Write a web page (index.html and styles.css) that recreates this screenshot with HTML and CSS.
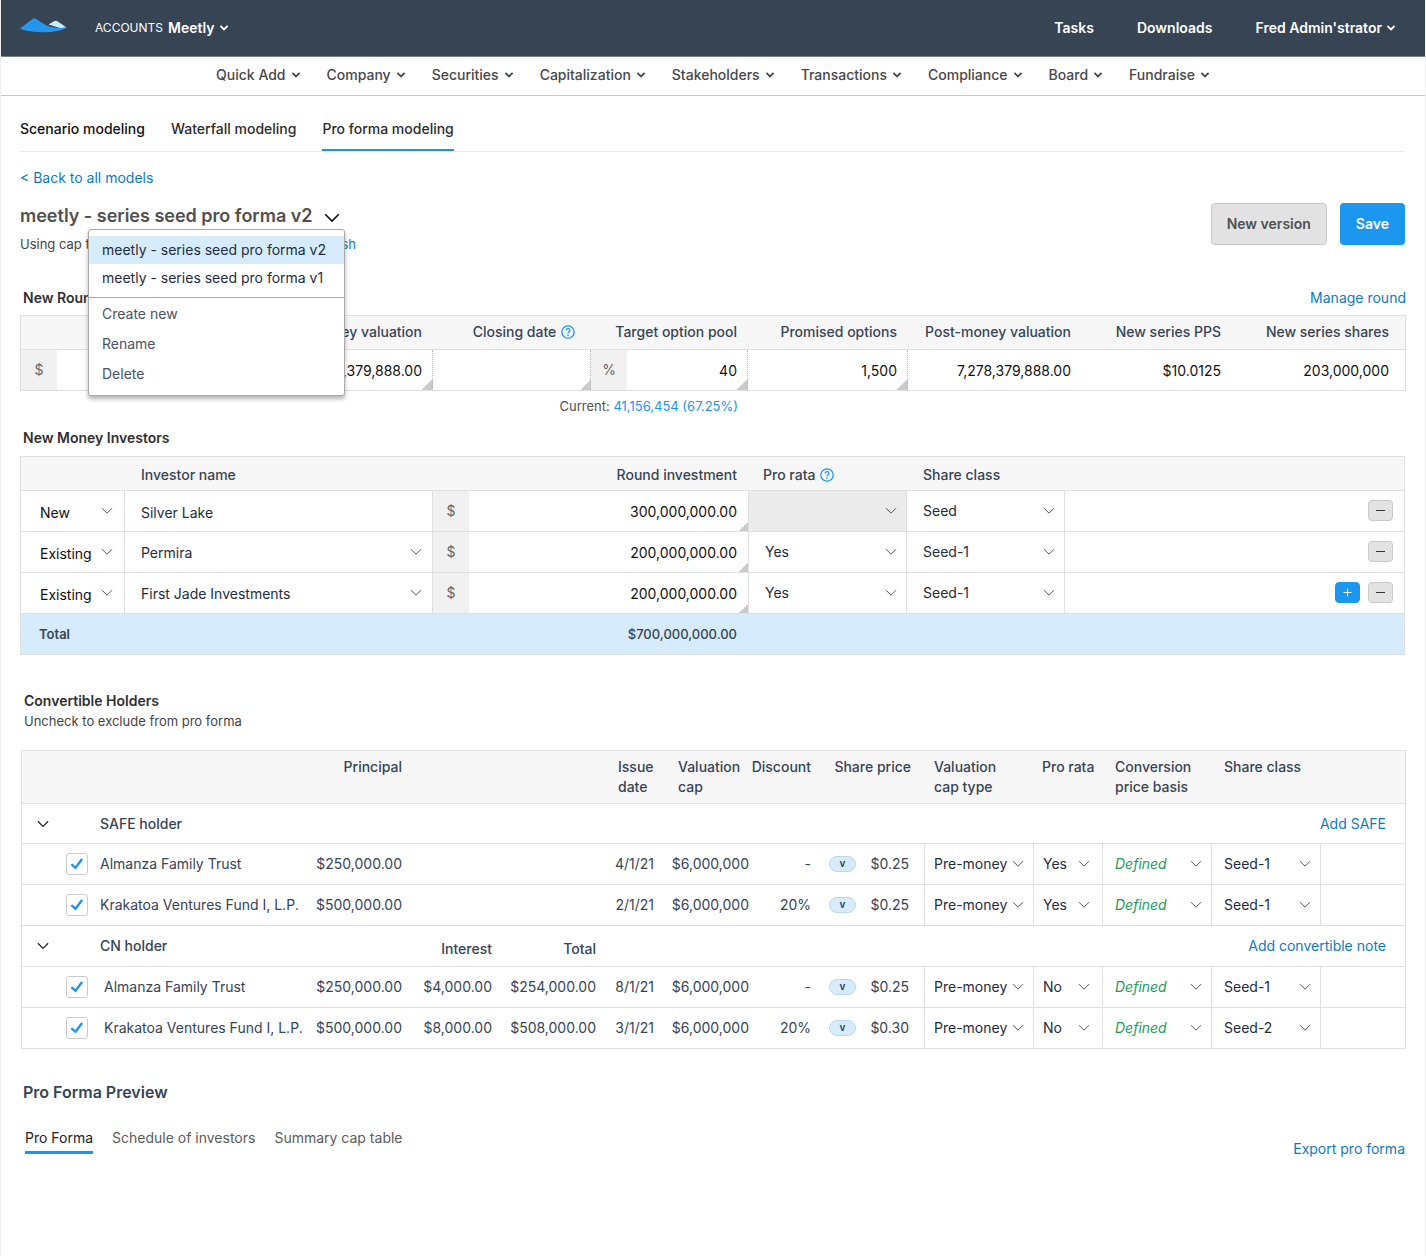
FILE: index.html
```html
<!DOCTYPE html>
<html lang="en">
<head>
<meta charset="utf-8">
<meta name="viewport" content="width=device-width, initial-scale=1">
<title>Pro forma modeling - Meetly</title>
<link rel="stylesheet" href="styles.css">
</head>
<body>
<svg class="sprite" width="0" height="0" aria-hidden="true">
  <symbol id="chev-bold" viewBox="0 0 10 8"><path d="M1.4 1.8 5 5.4l3.6-3.6" fill="none" stroke="currentColor" stroke-width="1.8"/></symbol>
  <symbol id="chev" viewBox="0 0 16 10"><path d="M1.2 1.3 8 8.1l6.800-6.800" fill="none" stroke="currentColor" stroke-width="1.600"/></symbol>
  <symbol id="help" viewBox="0 0 14 14"><circle cx="7" cy="7" r="6.200" fill="none" stroke="currentColor" stroke-width="1.300"/><path d="M5.100 5.500c0-1.100.8-1.800 1.900-1.800s1.900.7 1.900 1.700c0 1.400-1.900 1.400-1.900 2.900" fill="none" stroke="currentColor" stroke-width="1.200"/><circle cx="7" cy="10.100" r=".8" fill="currentColor"/></symbol>
</svg>
<div class="page">
  <header class="topbar">
    <a class="logo" href="#" aria-label="Home">
      <svg width="47" height="15" viewBox="0 0 47 15" aria-hidden="true">
        <path d="M28.500 6.500 34.500 3q1.300-.7 2.600 0L46.500 9.500 40 10Z" fill="#c9ecf6"/>
        <path d="M0 10.500 12.500.9q1.700-1.200 3.500 0L25 6.800q8 4.200 21.500 3Q39 14.200 23 14.300 8 14.300 0 10.500Z" fill="#2397f0"/>
      </svg>
    </a>
    <button class="account" type="button"><span class="account-label">ACCOUNTS</span><span>Meetly</span><svg class="i-bold" aria-hidden="true"><use href="#chev-bold"/></svg></button>
    <nav class="top-links" aria-label="User">
      <a href="#">Tasks</a>
      <a href="#">Downloads</a>
      <button type="button">Fred Admin'strator<svg class="i-bold" aria-hidden="true"><use href="#chev-bold"/></svg></button>
    </nav>
  </header>
  <nav class="mainnav" aria-label="Main">
    <button type="button">Quick Add<svg class="i-bold" aria-hidden="true"><use href="#chev-bold"/></svg></button>
    <button type="button">Company<svg class="i-bold" aria-hidden="true"><use href="#chev-bold"/></svg></button>
    <button type="button">Securities<svg class="i-bold" aria-hidden="true"><use href="#chev-bold"/></svg></button>
    <button type="button">Capitalization<svg class="i-bold" aria-hidden="true"><use href="#chev-bold"/></svg></button>
    <button type="button">Stakeholders<svg class="i-bold" aria-hidden="true"><use href="#chev-bold"/></svg></button>
    <button type="button">Transactions<svg class="i-bold" aria-hidden="true"><use href="#chev-bold"/></svg></button>
    <button type="button">Compliance<svg class="i-bold" aria-hidden="true"><use href="#chev-bold"/></svg></button>
    <button type="button">Board<svg class="i-bold" aria-hidden="true"><use href="#chev-bold"/></svg></button>
    <button type="button">Fundraise<svg class="i-bold" aria-hidden="true"><use href="#chev-bold"/></svg></button>
  </nav>

  <main>
    <nav class="tabs" aria-label="Modeling">
      <a class="tab-first" href="#">Scenario modeling</a>
      <a href="#">Waterfall modeling</a>
      <a class="active" href="#" aria-current="page">Pro forma modeling</a>
    </nav>
    <a class="link back" href="#">&lt; Back to all models</a>

    <div class="title-row">
      <div class="title-block">
        <div class="title-line">
          <h1>meetly - series seed pro forma v2</h1>
          <button class="title-toggle" type="button" aria-label="Switch model" aria-expanded="true"><svg width="16" height="10" aria-hidden="true"><use href="#chev"/></svg></button>
        </div>
        <p class="subline"><span>Using cap table as of today's date - 6/1/21.</span><a class="link" href="#">Refresh</a></p>
        <div class="menu">
          <div class="menu-models">
            <button class="selected" type="button">meetly - series seed pro forma v2</button>
            <button type="button">meetly - series seed pro forma v1</button>
          </div>
          <div class="menu-actions">
            <button type="button">Create new</button>
            <button type="button">Rename</button>
            <button type="button">Delete</button>
          </div>
        </div>
      </div>
      <div class="title-actions">
        <button class="btn btn-plain" type="button">New version</button>
        <button class="btn btn-primary" type="button">Save</button>
      </div>
    </div>

    <section class="round">
      <div class="section-head">
        <h2>New Round</h2>
        <a class="link" href="#">Manage round</a>
      </div>
      <table class="grid round-grid">
        <colgroup><col class="w-unit"><col><col class="w-pre"><col class="w-close"><col class="w-unit"><col class="w-pool"><col class="w-prom"><col class="w-post"><col class="w-pps"><col class="w-shares"></colgroup>
        <thead>
          <tr>
            <th colspan="2">Round size</th>
            <th>Pre-money valuation</th>
            <th class="with-help">Closing date <svg class="i-help" aria-hidden="true"><use href="#help"/></svg></th>
            <th colspan="2">Target option pool</th>
            <th>Promised options</th>
            <th>Post-money valuation</th>
            <th>New series PPS</th>
            <th class="last">New series shares</th>
          </tr>
        </thead>
        <tbody>
          <tr>
            <td class="unit">$</td>
            <td class="edit"><input type="text" aria-label="Round size" value=""></td>
            <td class="edit"><input type="text" aria-label="Pre-money valuation" value="6,578,379,888.00"></td>
            <td class="edit"><input type="text" aria-label="Closing date" value=""></td>
            <td class="unit">%</td>
            <td class="edit"><input type="text" aria-label="Target option pool" value="40"></td>
            <td class="edit"><input type="text" aria-label="Promised options" value="1,500"></td>
            <td class="figure">7,278,379,888.00</td>
            <td class="figure">$10.0125</td>
            <td class="figure last">203,000,000</td>
          </tr>
        </tbody>
      </table>
      <p class="current">Current: <a href="#">41,156,454 (67.25%)</a></p>
    </section>

    <section class="investors">
      <h2>New Money Investors</h2>
      <table class="grid investor-grid">
        <colgroup><col class="w-kind"><col class="w-investor"><col class="w-unit"><col class="w-amount"><col class="w-class"><col class="w-class"><col></colgroup>
        <thead>
          <tr>
            <th></th>
            <th class="left">Investor name</th>
            <th colspan="2">Round investment</th>
            <th class="left tight">Pro rata <svg class="i-help" aria-hidden="true"><use href="#help"/></svg></th>
            <th class="left">Share class</th>
            <th></th>
          </tr>
        </thead>
        <tbody>
          <tr>
            <td class="kind"><select aria-label="Investor type"><option>New</option></select></td>
            <td class="investor"><input type="text" aria-label="Investor name" value="Silver Lake"></td>
            <td class="unit">$</td>
            <td class="edit"><input type="text" aria-label="Round investment" value="300,000,000.00"></td>
            <td class="off"><select aria-label="Pro rata" disabled><option></option></select></td>
            <td><select aria-label="Share class"><option>Seed</option></select></td>
            <td class="row-actions"><div><button class="mini" type="button" aria-label="Remove investor"><svg width="11" height="11" aria-hidden="true"><path d="M1 5.500h9" stroke="currentColor"/></svg></button></div></td>
          </tr>
          <tr>
            <td class="kind"><select aria-label="Investor type"><option>Existing</option></select></td>
            <td class="investor"><select aria-label="Investor name"><option>Permira</option></select></td>
            <td class="unit">$</td>
            <td class="edit"><input type="text" aria-label="Round investment" value="200,000,000.00"></td>
            <td><select aria-label="Pro rata"><option>Yes</option></select></td>
            <td><select aria-label="Share class"><option>Seed-1</option></select></td>
            <td class="row-actions"><div><button class="mini" type="button" aria-label="Remove investor"><svg width="11" height="11" aria-hidden="true"><path d="M1 5.500h9" stroke="currentColor"/></svg></button></div></td>
          </tr>
          <tr>
            <td class="kind"><select aria-label="Investor type"><option>Existing</option></select></td>
            <td class="investor"><select aria-label="Investor name"><option>First Jade Investments</option></select></td>
            <td class="unit">$</td>
            <td class="edit"><input type="text" aria-label="Round investment" value="200,000,000.00"></td>
            <td><select aria-label="Pro rata"><option>Yes</option></select></td>
            <td><select aria-label="Share class"><option>Seed-1</option></select></td>
            <td class="row-actions"><div><button class="mini mini-add" type="button" aria-label="Add investor"><svg width="11" height="11" aria-hidden="true"><path d="M1.500 5.500h8M5.500 1.500v8" stroke="currentColor"/></svg></button><button class="mini" type="button" aria-label="Remove investor"><svg width="11" height="11" aria-hidden="true"><path d="M1 5.500h9" stroke="currentColor"/></svg></button></div></td>
          </tr>
        </tbody>
        <tfoot>
          <tr>
            <th class="total-label" colspan="2" scope="row">Total</th>
            <td class="total-sum" colspan="2">$700,000,000.00</td>
            <td colspan="3"></td>
          </tr>
        </tfoot>
      </table>
    </section>

    <section class="holders">
      <h2>Convertible Holders</h2>
      <p class="hint">Uncheck to exclude from pro forma</p>
      <table class="grid holder-grid">
        <colgroup><col class="w-fold"><col class="w-check"><col><col class="w-principal"><col class="w-interest"><col class="w-total"><col class="w-issue"><col class="w-cap"><col class="w-discount"><col class="w-price"><col class="w-pick"><col class="w-prorata"><col class="w-pick"><col class="w-pick"><col class="w-rest"></colgroup>
        <thead>
          <tr>
            <th></th><th></th><th></th>
            <th>Principal</th>
            <th></th><th></th>
            <th class="left h-issue">Issue<br>date</th>
            <th class="left h-cap">Valuation<br>cap</th>
            <th>Discount</th>
            <th class="h-price">Share price</th>
            <th class="left">Valuation<br>cap type</th>
            <th class="left h-prorata">Pro rata</th>
            <th class="left h-conv">Conversion<br>price basis</th>
            <th class="left h-conv">Share class</th>
            <th></th>
          </tr>
        </thead>
        <tbody>
          <tr class="group">
            <td class="fold"><button type="button" aria-label="Collapse SAFE holder"><svg width="12" height="8" aria-hidden="true"><use href="#chev"/></svg></button></td>
            <td></td>
            <th class="left" scope="row">SAFE holder</th>
            <td colspan="7"></td>
            <td class="group-link" colspan="5"><a class="link" href="#">Add SAFE</a></td>
          </tr>
          <tr>
            <td></td>
            <td class="check"><input type="checkbox" id="s1" checked></td>
            <td class="name"><label for="s1">Almanza Family Trust</label></td>
            <td>$250,000.00</td><td></td><td></td>
            <td>4/1/21</td><td>$6,000,000</td><td>-</td>
            <td class="price"><div><span class="pill">v</span>$0.25</div></td>
            <td class="pick"><select aria-label="Valuation cap type"><option>Pre-money</option></select></td>
            <td class="pick short"><select aria-label="Pro rata"><option>Yes</option></select></td>
            <td class="pick defined"><select aria-label="Conversion price basis"><option>Defined</option></select></td>
            <td class="pick wide"><select aria-label="Share class"><option>Seed-1</option></select></td>
            <td></td>
          </tr>
          <tr>
            <td></td>
            <td class="check"><input type="checkbox" id="s2" checked></td>
            <td class="name"><label for="s2">Krakatoa Ventures Fund I, L.P.</label></td>
            <td>$500,000.00</td><td></td><td></td>
            <td>2/1/21</td><td>$6,000,000</td><td>20%</td>
            <td class="price"><div><span class="pill">v</span>$0.25</div></td>
            <td class="pick"><select aria-label="Valuation cap type"><option>Pre-money</option></select></td>
            <td class="pick short"><select aria-label="Pro rata"><option>Yes</option></select></td>
            <td class="pick defined"><select aria-label="Conversion price basis"><option>Defined</option></select></td>
            <td class="pick wide"><select aria-label="Share class"><option>Seed-1</option></select></td>
            <td></td>
          </tr>
        </tbody>
        <tbody class="notes">
          <tr class="group">
            <td class="fold"><button type="button" aria-label="Collapse CN holder"><svg width="12" height="8" aria-hidden="true"><use href="#chev"/></svg></button></td>
            <td></td>
            <th class="left" scope="row">CN holder</th>
            <td></td>
            <th class="sub" scope="col">Interest</th>
            <th class="sub" scope="col">Total</th>
            <td colspan="4"></td>
            <td class="group-link" colspan="5"><a class="link" href="#">Add convertible note</a></td>
          </tr>
          <tr>
            <td></td>
            <td class="check"><input type="checkbox" id="n1" checked></td>
            <td class="name"><label for="n1">Almanza Family Trust</label></td>
            <td>$250,000.00</td><td>$4,000.00</td><td>$254,000.00</td>
            <td>8/1/21</td><td>$6,000,000</td><td>-</td>
            <td class="price"><div><span class="pill">v</span>$0.25</div></td>
            <td class="pick"><select aria-label="Valuation cap type"><option>Pre-money</option></select></td>
            <td class="pick short"><select aria-label="Pro rata"><option>No</option></select></td>
            <td class="pick defined"><select aria-label="Conversion price basis"><option>Defined</option></select></td>
            <td class="pick wide"><select aria-label="Share class"><option>Seed-1</option></select></td>
            <td></td>
          </tr>
          <tr>
            <td></td>
            <td class="check"><input type="checkbox" id="n2" checked></td>
            <td class="name"><label for="n2">Krakatoa Ventures Fund I, L.P.</label></td>
            <td>$500,000.00</td><td>$8,000.00</td><td>$508,000.00</td>
            <td>3/1/21</td><td>$6,000,000</td><td>20%</td>
            <td class="price"><div><span class="pill">v</span>$0.30</div></td>
            <td class="pick"><select aria-label="Valuation cap type"><option>Pre-money</option></select></td>
            <td class="pick short"><select aria-label="Pro rata"><option>No</option></select></td>
            <td class="pick defined"><select aria-label="Conversion price basis"><option>Defined</option></select></td>
            <td class="pick wide"><select aria-label="Share class"><option>Seed-2</option></select></td>
            <td></td>
          </tr>
        </tbody>
      </table>
    </section>

    <section class="preview">
      <h2>Pro Forma Preview</h2>
      <div class="preview-bar">
        <nav class="subtabs" aria-label="Preview">
          <a class="active" href="#" aria-current="page">Pro Forma</a>
          <a href="#">Schedule of investors</a>
          <a href="#">Summary cap table</a>
        </nav>
        <a class="link" href="#">Export pro forma</a>
      </div>
    </section>
  </main>
</div>
</body>
</html>
```
FILE: styles.css
```css
* { box-sizing: border-box; }

body {
  margin: 0;
  background: #fff;
  color: #374454;
  font: 14px/20px Inter, "Liberation Sans", sans-serif;
}

h1, h2, p { margin: 0; }
a { text-decoration: none; color: inherit; }
button, input, select { font: inherit; color: inherit; margin: 0; }
button { background: none; border: 0; padding: 0; cursor: pointer; }
svg { flex: none; }

.sprite { display: block; position: absolute; }
.i-bold { width: 10px; height: 8px; }
.i-help { width: 14px; height: 14px; color: #1c94f0; vertical-align: -2px; margin-left: 1px; }
.link { color: #0d7bc4; }

.page {
  min-height: 100vh;
  border: solid #efefef;
  border-width: 0 1px;
}

/* Top bar */
.topbar {
  display: flex;
  align-items: center;
  height: 57px;
  padding: 0 29px 0 19px;
  background: #374454;
  border-bottom: 1px solid #76808c;
  color: #fff;
  font-weight: 600;
}
.logo { display: flex; margin: 0 28px 6px 0; }
.topbar button, .mainnav button { display: flex; align-items: center; gap: 5px; }
.account-label { font-size: 12px; font-weight: 400; }
.top-links { display: flex; gap: 43px; margin-left: auto; }
.top-links button { gap: 4px; }

.mainnav {
  display: flex;
  justify-content: center;
  gap: 26px;
  height: 39px;
  padding-bottom: 2px;
  border-bottom: 1px solid #cbcbcb;
  color: #484848;
  font-weight: 500;
}

main { padding: 0 19px 95px; }

.tabs {
  display: flex;
  gap: 26px;
  margin-right: 2px;
  padding-top: 23px;
  border-bottom: 1px solid #ebebeb;
  color: #2c2c2c;
  font-weight: 500;
}
.tabs a { padding-bottom: 10px; border-bottom: 2px solid transparent; }
.tabs .tab-first { color: #111; }
.tabs .active { border-color: #1c94f0; }

.back { display: block; width: max-content; margin-top: 16px; }

/* Title */
.title-row {
  display: flex;
  justify-content: space-between;
  align-items: flex-start;
  margin-top: 15px;
}
.title-block { position: relative; }
.title-line { display: flex; align-items: center; gap: 11px; }
h1 { color: #505050; font-size: 18px; line-height: 26px; font-weight: 600; }
.title-toggle { display: flex; padding-top: 3px; color: #111; }
.subline { display: flex; justify-content: space-between; width: 336px; margin-top: 5px; color: #444; font-size: 13px; }
.title-actions { display: flex; gap: 13px; margin-right: 1px; }
.btn { height: 42px; padding: 0 16px; border-radius: 4px; font-weight: 600; }
.btn-plain { padding: 0 15px; background: #e2e2e2; border: 1px solid #c9c9c9; color: #505050; }
.btn-primary { background: #1c97ef; color: #fff; }

.menu {
  position: absolute;
  z-index: 1;
  top: 26px;
  left: 68px;
  width: 257px;
  background: #fff;
  border: 1px solid #aaa;
  border-radius: 3px;
  box-shadow: 0 3px 4px rgba(0, 0, 0, .3);
}
.menu button { display: block; width: 100%; padding: 0 13px; text-align: left; white-space: nowrap; }
.menu-models { padding: 6px 0 5px; border-bottom: 1px solid #aaa; color: #1f2c3c; }
.menu-models button { line-height: 28px; }
.menu-models .selected { background: #d6ecfd; }
.menu-actions { padding: 1px 0 6px; color: #4a5463; }
.menu-actions button { line-height: 30px; }

/* Sections */
h2 { color: #2f2f2f; font-size: 14px; line-height: 20px; font-weight: 600; }
.round { margin-top: 34px; }
.section-head { display: flex; justify-content: space-between; margin-bottom: 7px; padding-left: 3px; }
.current {
  width: 718px;
  margin-top: 5px;
  color: #505050;
  font-size: 13px;
  text-align: right;
}
.current a { color: #1c94f0; }

/* Tables */
.grid {
  width: 100%;
  table-layout: fixed;
  border: 1px solid #e0e0e0;
  border-collapse: separate;
  border-spacing: 0;
}
.grid th, .grid td { height: 41px; padding: 0; text-align: right; font-weight: 400; border-bottom: 1px solid #e0e0e0; white-space: nowrap; }
.grid th { font-weight: 500; }
.grid > :last-child > tr:last-child > * { height: 40px; border-bottom: 0; }
.grid thead th { height: 34px; background: #f7f7f7; }
.grid .left { text-align: left; }
.grid .unit { background: #f1f1f1; color: #666; text-align: center; }

.grid input[type="text"], .grid select {
  display: block;
  width: 100%;
  height: 40px;
  border: 0;
  border-radius: 0;
  outline: 0;
  background: none;
}
.grid select {
  appearance: none;
  padding: 0 24px 0 16px;
  opacity: 1;
  background: url("data:image/svg+xml,%3Csvg xmlns='http://www.w3.org/2000/svg' width='12' height='8'%3E%3Cpath d='M1 1.200 6 6.200 11 1.200' fill='none' stroke='%23555'/%3E%3C/svg%3E") right 9px center no-repeat;
}
.edit {
  background: linear-gradient(to bottom right, transparent 50%, #cbcbcb 50%) right bottom / 11px 11px no-repeat border-box;
}
.grid .edit input { padding: 0 11px; color: #111; text-align: right; }

.w-unit { width: 36px; }
.w-pre { width: 204px; }
.w-close { width: 158px; }
.w-pool { width: 121px; }
.w-prom { width: 160px; }
.w-post { width: 174px; }
.w-pps { width: 150px; }
.w-shares { width: 173px; }
.round-grid th, .round-grid .figure { padding-right: 11px; }
.round-grid thead th { padding-bottom: 2px; }
.round-grid .with-help { padding-right: 16px; }
.round-grid .last { padding-right: 16px; }
.round-grid .edit { border-right: 1px dotted #bbb; }
.round-grid .edit input { padding-right: 10px; }
.round-grid .figure { padding-top: 2px; color: #111; }

.investors { margin: 12px 1px 0 0; }
.investors h2 { margin-bottom: 8px; padding-left: 3px; }
.w-kind { width: 104px; }
.w-investor { width: 308px; }
.w-amount { width: 280px; }
.w-class { width: 158px; }
.investor-grid tbody { color: #1f2c3c; }
.investor-grid td { border-right: 1px solid #e0e0e0; }
.investor-grid td:last-child, .investor-grid .unit { border-right: 0; }
.investor-grid thead th { padding: 2px 12px 0; }
.investor-grid thead .left { padding: 2px 16px 0; }
.investor-grid thead .tight { padding: 2px 14px 0; }
.investor-grid .kind { color: #111; }
.investor-grid .kind select { padding: 4px 20px 0 19px; background-position: right 11px center; }
.investor-grid .investor select { padding-top: 2px; background-position: right 10px center; }
.investor-grid .investor input { padding: 2px 16px 0; }
.investor-grid .off { background: #ebebeb; }
.row-actions div { display: flex; justify-content: flex-end; gap: 8px; padding: 0 11px 2px 0; }
.mini {
  display: flex;
  align-items: center;
  justify-content: center;
  width: 25px;
  height: 21px;
  background: #e2e2e2;
  border: 1px solid #c9c9c9;
  border-radius: 4px;
  color: #333;
}
.mini-add { background: #1c97ef; border-color: #1c97ef; color: #fff; }
.investor-grid tfoot tr > * { background: #d6ecfd; border-right: 0; font-size: 13px; }
.investor-grid .total-label { padding-left: 18px; text-align: left; font-weight: 600; }
.investor-grid .total-sum { padding-right: 12px; font-weight: 500; }

.holders { margin: 36px 0 0 1px; }
.holders h2, .hint { padding-left: 3px; }
.hint { margin-bottom: 19px; color: #444; font-size: 13px; }
.w-fold { width: 38px; }
.w-check { width: 40px; }
.w-principal { width: 94px; }
.w-interest { width: 90px; }
.w-total { width: 104px; }
.w-issue { width: 58px; }
.w-cap { width: 95px; }
.w-discount { width: 62px; }
.w-price { width: 114px; }
.w-pick { width: 109px; }
.w-prorata { width: 69px; }
.w-rest { width: 84px; }
.holder-grid thead th { height: 53px; padding-top: 6px; vertical-align: top; }
.holder-grid .left.h-issue { padding-left: 22px; }
.holder-grid .left.h-cap { padding-left: 24px; }
.holder-grid .h-price { padding-right: 14px; }
.holder-grid thead .left { padding-left: 9px; }
.holder-grid thead .h-prorata { padding-left: 8px; }
.holder-grid thead .h-conv { padding-left: 12px; }
.holder-grid tbody:not(.notes) .group > * { height: 40px; }
.holder-grid .sub { padding-top: 6px; }
.holder-grid .fold button { display: flex; padding-left: 15px; color: #222; }
.holder-grid .group-link { padding-right: 19px; }
.holder-grid .name { text-align: left; }
.notes .name { padding-left: 4px; }
.check input {
  appearance: none;
  display: block;
  width: 22px;
  height: 22px;
  margin-left: 6px;
  border: 1px solid #ccc;
  border-radius: 3px;
}
.check input:checked {
  background: url("data:image/svg+xml,%3Csvg xmlns='http://www.w3.org/2000/svg' width='12' height='12'%3E%3Cpath d='M1.200 6.800 4.500 9.800 10.500 1.800' fill='none' stroke='%231c94f0' stroke-width='2.400' stroke-linecap='round'/%3E%3C/svg%3E") center no-repeat;
}
.price div { display: flex; align-items: center; justify-content: space-between; padding: 0 15px 0 18px; }
.pill {
  width: 27px;
  height: 16px;
  border: 1px solid #bdd7ea;
  border-radius: 8px;
  background: #d6ecfd;
  color: #1f3c5c;
  font-size: 10px;
  line-height: 13px;
  font-weight: 600;
  text-align: center;
}
.grid .price, .grid .pick { border-right: 1px solid #e0e0e0; }
.pick { color: #1f2c3c; }
.pick select { padding: 0 18px 0 9px; }
.grid .short select { background-position: right 12px center; }
.defined { color: #27995a; font-style: italic; }
.defined select, .wide select { padding-left: 12px; }

.preview { margin-top: 31px; padding-left: 3px; }
.preview h2 { color: #374454; font-size: 16px; line-height: 24px; }
.preview-bar { display: flex; align-items: flex-end; justify-content: space-between; margin: 24px 1px 0 2px; }
.preview-bar > .link { margin-bottom: -5px; }
.subtabs { display: flex; gap: 19px; color: #5c5c5c; }
.subtabs a { padding-bottom: 3px; border-bottom: 3px solid transparent; }
.subtabs .active { border-color: #1c94f0; color: #222; }
```
